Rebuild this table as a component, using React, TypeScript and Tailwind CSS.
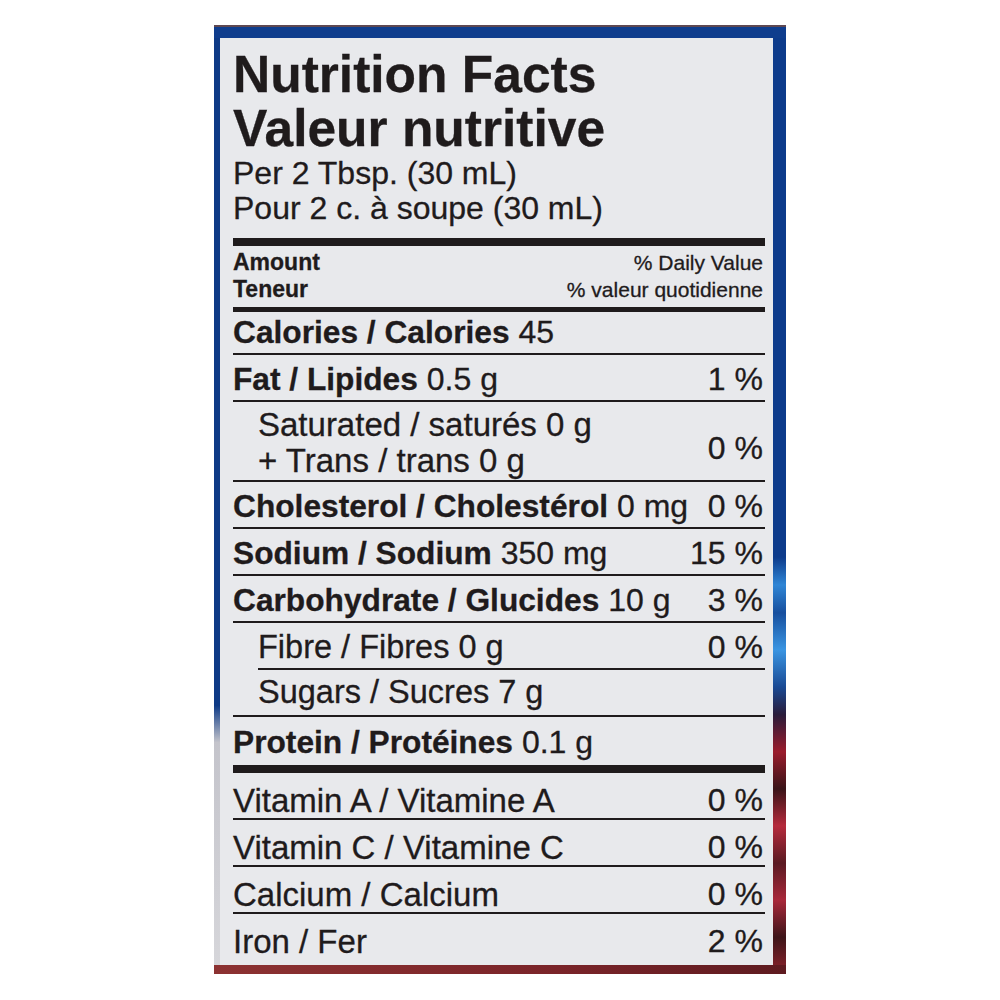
import React from "react";

type RowProps = {
  bold?: string;
  rest?: string;
  pct?: string;
  indent?: boolean;
  cls: string;
  size?: string;
};

function Row({ bold, rest, pct, indent, cls, size }: RowProps) {
  return (
    <div className={`flex justify-between items-start leading-none ${size ?? "text-[32px]"} ${cls}`}>
      <div className={indent ? "pl-[25px]" : ""}>
        {bold ? <span className="font-bold text-[31.7px]">{bold}</span> : null}
        {rest ? <span>{rest}</span> : null}
      </div>
      {pct ? <span className="pr-[2px] text-[32px]">{pct}</span> : null}
    </div>
  );
}

export default function App() {
  return (
    <div className="min-h-screen w-full bg-white font-['Liberation_Sans',Arial,sans-serif] text-[#1f1b1c] [-webkit-text-stroke:0.3px_#1f1b1c]">
      <div className="h-[25px]" />
      <div className="ml-[214px] w-[572px] flex flex-col">
        <div className="h-[13px] bg-[#0f3d8d] border-t-2 border-[#5e4852]" />
        <div className="flex">
          <div className="w-[6px] bg-[linear-gradient(to_bottom,#0e3a86_0%,#0e3a86_72%,#c4c4cb_76%,#d6d6da_100%)]" />
          <div className="w-[553px] bg-[#e8e9ec] pl-[13px] pr-[8px] pt-[9px]">
            <div className="text-[51.5px] font-bold leading-[54px]">
              <div>Nutrition Facts</div>
              <div>Valeur nutritive</div>
            </div>
            <div className="mt-[1px] text-[32px] leading-[35px]">
              <div>Per 2 Tbsp. (30 mL)</div>
              <div>Pour 2 c. à soupe (30 mL)</div>
            </div>
            <div className="mt-[12px] h-[8px] bg-[#1f1b1c]" />
            <div className="pt-[3px] pb-[4px]">
              <div className="flex justify-between items-baseline leading-[27px]">
                <span className="text-[23px] font-bold">Amount</span>
                <span className="text-[21px] pr-[2px]">% Daily Value</span>
              </div>
              <div className="flex justify-between items-baseline leading-[27px]">
                <span className="text-[23px] font-bold">Teneur</span>
                <span className="text-[21px] pr-[2px]">% valeur quotidienne</span>
              </div>
            </div>
            <div className="h-[5px] bg-[#1f1b1c]" />

            <Row cls="h-[43px] pt-[4px] border-b-2 border-[#1f1b1c]" bold="Calories / Calories" rest=" 45" />
            <Row cls="h-[47px] pt-[8px] border-b-2 border-[#1f1b1c]" bold="Fat / Lipides" rest=" 0.5 g" pct="1 %" />

            <div className="flex justify-between items-start h-[80px] pt-[5px] border-b-2 border-[#1f1b1c]">
              <div className="pl-[25px] leading-[36px] text-[33px]">
                <div>Saturated / saturés 0 g</div>
                <div>+ Trans / trans 0 g</div>
              </div>
              <span className="pr-[2px] leading-none mt-[25px] text-[32px]">0 %</span>
            </div>

            <Row cls="h-[47px] pt-[8px] border-b-2 border-[#1f1b1c]" bold="Cholesterol / Cholestérol" rest=" 0 mg" pct="0 %" />
            <Row cls="h-[47px] pt-[8px] border-b-2 border-[#1f1b1c]" bold="Sodium / Sodium" rest=" 350 mg" pct="15 %" />
            <Row cls="h-[47px] pt-[8px] border-b-2 border-[#1f1b1c]" bold="Carbohydrate / Glucides" rest=" 10 g" pct="3 %" />
            <Row cls="ml-[25px] h-[47px] pt-[8px] border-b-2 border-[#1f1b1c]" size="text-[32.5px]" rest="Fibre / Fibres 0 g" pct="0 %" />
            <Row cls="h-[47px] pt-[6px] border-b-2 border-[#1f1b1c]" size="text-[32.5px]" indent rest="Sugars / Sucres 7 g" />
            <Row cls="h-[56px] pt-[9px] border-b-8 border-[#1f1b1c]" bold="Protein / Protéines" rest=" 0.1 g" />

            <Row cls="h-[47px] pt-[11px] border-b-2 border-[#1f1b1c]" size="text-[33px]" rest="Vitamin A / Vitamine A" pct="0 %" />
            <Row cls="h-[47px] pt-[11px] border-b-2 border-[#1f1b1c]" size="text-[33px]" rest="Vitamin C / Vitamine C" pct="0 %" />
            <Row cls="h-[47px] pt-[11px] border-b-2 border-[#1f1b1c]" size="text-[33px]" rest="Calcium / Calcium" pct="0 %" />
            <Row cls="h-[51px] pt-[11px]" size="text-[33px]" rest="Iron / Fer" pct="2 %" />
          </div>
          <div className="w-[13px] bg-[linear-gradient(to_bottom,#0d3b8b_0%,#0d3b8b_56%,#2f86d6_59%,#174f9e_62%,#3a95e2_66%,#1a4a94_70%,#2a1c3a_73%,#9a1c2c_77%,#3a1418_81%,#b52a3c_85%,#5a1a22_89%,#a8283a_93%,#3e1519_97%,#7a2028_100%)]" />
        </div>
        <div className="h-[9px] bg-[linear-gradient(to_right,#8c3232,#7a2429_60%,#5e1b20)]" />
      </div>
    </div>
  );
}
